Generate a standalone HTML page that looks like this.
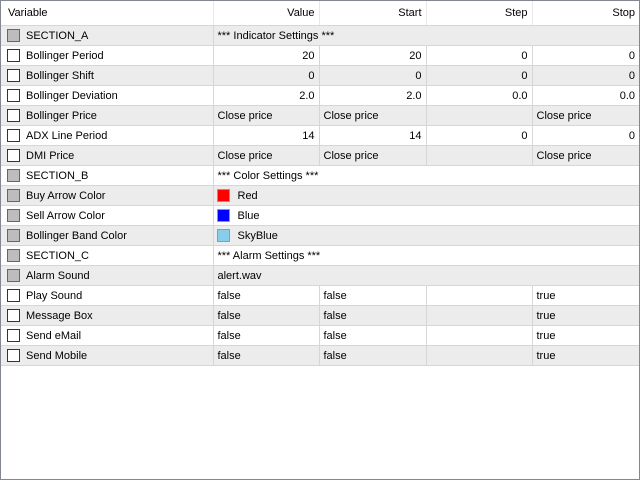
<!DOCTYPE html>
<html><head><style>
body{margin:0;width:640px;height:480px;overflow:hidden;background:#fff;font-family:"Liberation Sans",sans-serif;font-size:11px;color:#000}
#f{position:absolute;left:0;top:0;width:638px;height:478px;border:1px solid #828790;background:#fff}
table{position:absolute;left:0;top:0;border-collapse:collapse;table-layout:fixed;width:638px}
td{height:19px;border-bottom:1px solid #d6d6d6;border-right:1px solid #d6d6d6;padding:0 4px;white-space:nowrap;overflow:hidden}
tr.h td{height:24px;background:#fff;text-align:right;padding-right:4px;border-right-color:#e8e8e8}
tr.h td:first-child{text-align:left;padding-left:7px}
tr.g td{background:#ececec}
td.r{text-align:right}
td.n{padding-left:6px;position:relative}
.cb{display:inline-block;width:11px;height:11px;border:1px solid #333;background:#fff;vertical-align:-3px;margin-right:6px}
.cb.d{background:#bdbdbd;border-color:#666}
.sw{display:inline-block;width:11px;height:11px;border:1px solid #999;vertical-align:-3px;margin-right:8px}
td:last-child{border-right:none}
</style></head><body><div id="f">
<table>
<colgroup><col style="width:212px"><col style="width:106px"><col style="width:107px"><col style="width:106px"><col style="width:107px"></colgroup>
<tr class="h"><td>Variable</td><td>Value</td><td>Start</td><td>Step</td><td>Stop</td></tr>
<tr class="g"><td class="n"><span class="cb d"></span>SECTION_A</td><td colspan="4">*** Indicator Settings ***</td></tr>
<tr><td class="n"><span class="cb"></span>Bollinger Period</td><td class="r">20</td><td class="r">20</td><td class="r">0</td><td class="r">0</td></tr>
<tr class="g"><td class="n"><span class="cb"></span>Bollinger Shift</td><td class="r">0</td><td class="r">0</td><td class="r">0</td><td class="r">0</td></tr>
<tr><td class="n"><span class="cb"></span>Bollinger Deviation</td><td class="r">2.0</td><td class="r">2.0</td><td class="r">0.0</td><td class="r">0.0</td></tr>
<tr class="g"><td class="n"><span class="cb"></span>Bollinger Price</td><td>Close price</td><td>Close price</td><td></td><td>Close price</td></tr>
<tr><td class="n"><span class="cb"></span>ADX Line Period</td><td class="r">14</td><td class="r">14</td><td class="r">0</td><td class="r">0</td></tr>
<tr class="g"><td class="n"><span class="cb"></span>DMI Price</td><td>Close price</td><td>Close price</td><td></td><td>Close price</td></tr>
<tr><td class="n"><span class="cb d"></span>SECTION_B</td><td colspan="4">*** Color Settings ***</td></tr>
<tr class="g"><td class="n"><span class="cb d"></span>Buy Arrow Color</td><td colspan="4" style="padding-left:3px"><span class="sw" style="background:#f00"></span>Red</td></tr>
<tr><td class="n"><span class="cb d"></span>Sell Arrow Color</td><td colspan="4" style="padding-left:3px"><span class="sw" style="background:#00f"></span>Blue</td></tr>
<tr class="g"><td class="n"><span class="cb d"></span>Bollinger Band Color</td><td colspan="4" style="padding-left:3px"><span class="sw" style="background:#87ceeb"></span>SkyBlue</td></tr>
<tr><td class="n"><span class="cb d"></span>SECTION_C</td><td colspan="4">*** Alarm Settings ***</td></tr>
<tr class="g"><td class="n"><span class="cb d"></span>Alarm Sound</td><td colspan="4">alert.wav</td></tr>
<tr><td class="n"><span class="cb"></span>Play Sound</td><td>false</td><td>false</td><td></td><td>true</td></tr>
<tr class="g"><td class="n"><span class="cb"></span>Message Box</td><td>false</td><td>false</td><td></td><td>true</td></tr>
<tr><td class="n"><span class="cb"></span>Send eMail</td><td>false</td><td>false</td><td></td><td>true</td></tr>
<tr class="g"><td class="n"><span class="cb"></span>Send Mobile</td><td>false</td><td>false</td><td></td><td>true</td></tr>
</table></div></body></html>
